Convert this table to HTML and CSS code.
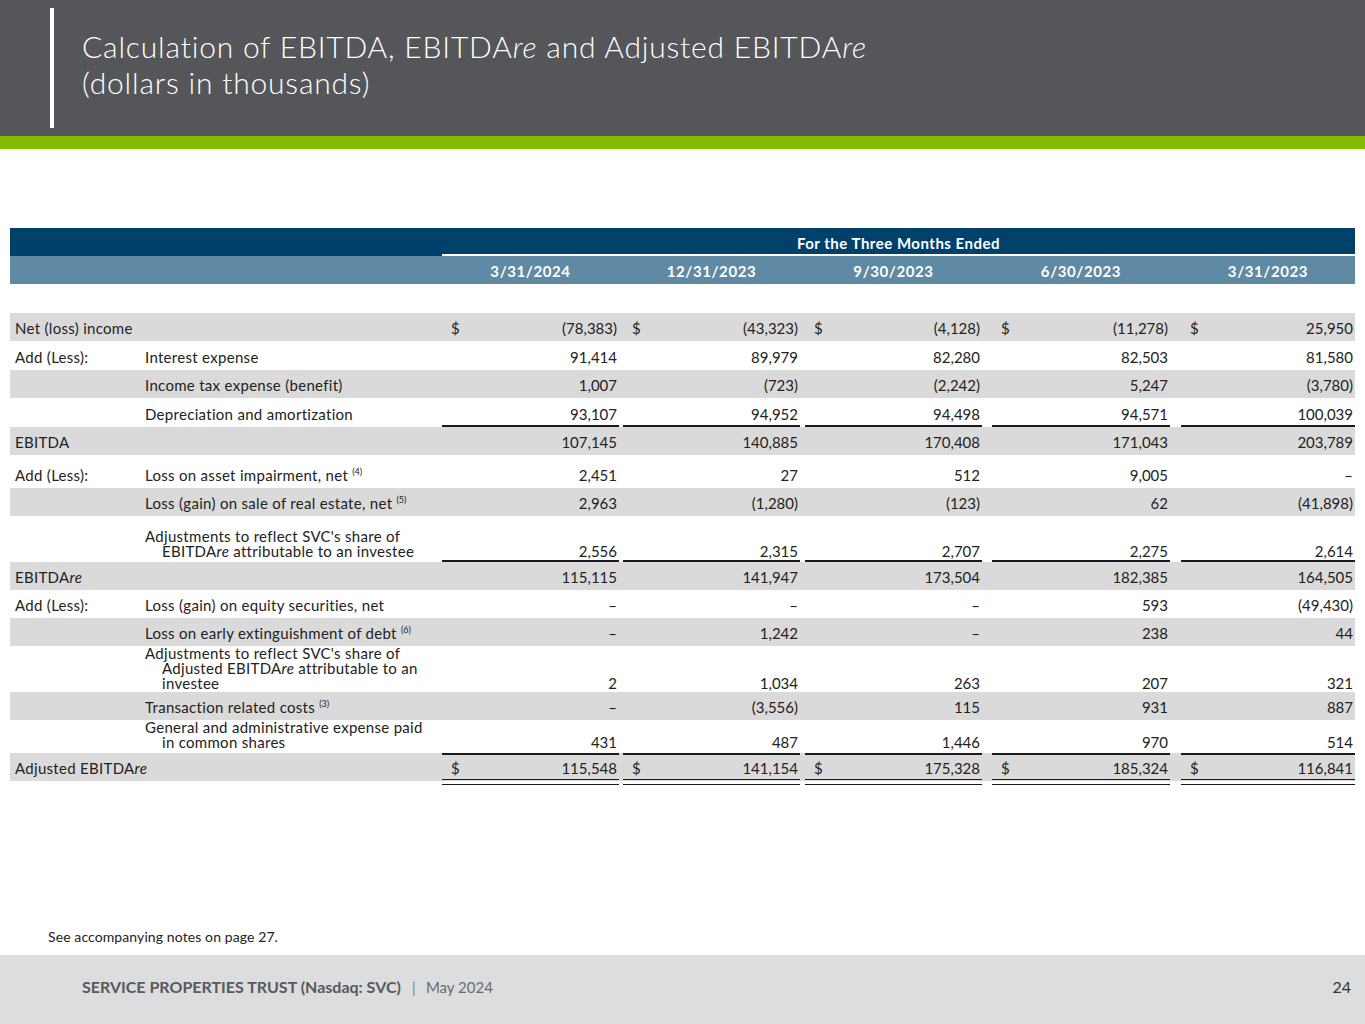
FILE: index.html
```html
<!DOCTYPE html>
<html lang="en">
<head>
<meta charset="utf-8">
<title>Calculation of EBITDA</title>
<link rel="stylesheet" href="styles.css">
</head>
<body>
<header class="top">
  <div class="vbar"></div>
  <h1 class="title">Calculation of EBITDA, EBITDA<i>re</i> and Adjusted EBITDA<i>re</i><br>(dollars in thousands)</h1>
</header>
<div class="green"></div>
<main class="content">
  <section class="fin">
    <div class="hrow1"><div class="hspan">For the Three Months Ended</div></div>
    <div class="row hrow2">
      <div class="c c1">3/31/2024</div>
      <div class="c c2">12/31/2023</div>
      <div class="c c3">9/30/2023</div>
      <div class="c c4">6/30/2023</div>
      <div class="c c5">3/31/2023</div>
    </div>
    <div class="gap"></div>

    <div class="row gray h28">
      <div class="lab full">Net (loss) income</div>
      <div class="c c1"><span>$</span><span>(78,383)</span></div>
      <div class="c c2"><span>$</span><span>(43,323)</span></div>
      <div class="c c3"><span>$</span><span>(4,128)</span></div>
      <div class="c c4"><span>$</span><span>(11,278)</span></div>
      <div class="c c5"><span>$</span><span>25,950</span></div>
    </div>
    <div class="row h29">
      <div class="lab">Add (Less):</div>
      <div class="lab2">Interest expense</div>
      <div class="c c1"><span></span><span>91,414</span></div>
      <div class="c c2"><span></span><span>89,979</span></div>
      <div class="c c3"><span></span><span>82,280</span></div>
      <div class="c c4"><span></span><span>82,503</span></div>
      <div class="c c5"><span></span><span>81,580</span></div>
    </div>
    <div class="row gray h28">
      <div class="lab2">Income tax expense (benefit)</div>
      <div class="c c1"><span></span><span>1,007</span></div>
      <div class="c c2"><span></span><span>(723)</span></div>
      <div class="c c3"><span></span><span>(2,242)</span></div>
      <div class="c c4"><span></span><span>5,247</span></div>
      <div class="c c5"><span></span><span>(3,780)</span></div>
    </div>
    <div class="row h29 ul">
      <div class="lab2">Depreciation and amortization</div>
      <div class="c c1"><span></span><span>93,107</span></div>
      <div class="c c2"><span></span><span>94,952</span></div>
      <div class="c c3"><span></span><span>94,498</span></div>
      <div class="c c4"><span></span><span>94,571</span></div>
      <div class="c c5"><span></span><span>100,039</span></div>
    </div>
    <div class="row gray h28">
      <div class="lab full">EBITDA</div>
      <div class="c c1"><span></span><span>107,145</span></div>
      <div class="c c2"><span></span><span>140,885</span></div>
      <div class="c c3"><span></span><span>170,408</span></div>
      <div class="c c4"><span></span><span>171,043</span></div>
      <div class="c c5"><span></span><span>203,789</span></div>
    </div>
    <div class="row h33">
      <div class="lab">Add (Less):</div>
      <div class="lab2">Loss on asset impairment, net <sup class="fn">(4)</sup></div>
      <div class="c c1"><span></span><span>2,451</span></div>
      <div class="c c2"><span></span><span>27</span></div>
      <div class="c c3"><span></span><span>512</span></div>
      <div class="c c4"><span></span><span>9,005</span></div>
      <div class="c c5"><span></span><span>–</span></div>
    </div>
    <div class="row gray h28">
      <div class="lab2">Loss (gain) on sale of real estate, net <sup class="fn">(5)</sup></div>
      <div class="c c1"><span></span><span>2,963</span></div>
      <div class="c c2"><span></span><span>(1,280)</span></div>
      <div class="c c3"><span></span><span>(123)</span></div>
      <div class="c c4"><span></span><span>62</span></div>
      <div class="c c5"><span></span><span>(41,898)</span></div>
    </div>
    <div class="row h46 ul tight">
      <div class="lab2">Adjustments to reflect SVC's share of<br>EBITDA<i>re</i> attributable to an investee</div>
      <div class="c c1"><span></span><span>2,556</span></div>
      <div class="c c2"><span></span><span>2,315</span></div>
      <div class="c c3"><span></span><span>2,707</span></div>
      <div class="c c4"><span></span><span>2,275</span></div>
      <div class="c c5"><span></span><span>2,614</span></div>
    </div>
    <div class="row gray h28">
      <div class="lab full">EBITDA<i>re</i></div>
      <div class="c c1"><span></span><span>115,115</span></div>
      <div class="c c2"><span></span><span>141,947</span></div>
      <div class="c c3"><span></span><span>173,504</span></div>
      <div class="c c4"><span></span><span>182,385</span></div>
      <div class="c c5"><span></span><span>164,505</span></div>
    </div>
    <div class="row h28">
      <div class="lab">Add (Less):</div>
      <div class="lab2">Loss (gain) on equity securities, net</div>
      <div class="c c1"><span></span><span>–</span></div>
      <div class="c c2"><span></span><span>–</span></div>
      <div class="c c3"><span></span><span>–</span></div>
      <div class="c c4"><span></span><span>593</span></div>
      <div class="c c5"><span></span><span>(49,430)</span></div>
    </div>
    <div class="row gray h28">
      <div class="lab2">Loss on early extinguishment of debt <sup class="fn">(6)</sup></div>
      <div class="c c1"><span></span><span>–</span></div>
      <div class="c c2"><span></span><span>1,242</span></div>
      <div class="c c3"><span></span><span>–</span></div>
      <div class="c c4"><span></span><span>238</span></div>
      <div class="c c5"><span></span><span>44</span></div>
    </div>
    <div class="row h46 tight">
      <div class="lab2">Adjustments to reflect SVC's share of<br>Adjusted EBITDA<i>re</i> attributable to an<br>investee</div>
      <div class="c c1"><span></span><span>2</span></div>
      <div class="c c2"><span></span><span>1,034</span></div>
      <div class="c c3"><span></span><span>263</span></div>
      <div class="c c4"><span></span><span>207</span></div>
      <div class="c c5"><span></span><span>321</span></div>
    </div>
    <div class="row gray h28">
      <div class="lab2">Transaction related costs <sup class="fn">(3)</sup></div>
      <div class="c c1"><span></span><span>–</span></div>
      <div class="c c2"><span></span><span>(3,556)</span></div>
      <div class="c c3"><span></span><span>115</span></div>
      <div class="c c4"><span></span><span>931</span></div>
      <div class="c c5"><span></span><span>887</span></div>
    </div>
    <div class="row h33 ul">
      <div class="lab2">General and administrative expense paid<br>in common shares</div>
      <div class="c c1"><span></span><span>431</span></div>
      <div class="c c2"><span></span><span>487</span></div>
      <div class="c c3"><span></span><span>1,446</span></div>
      <div class="c c4"><span></span><span>970</span></div>
      <div class="c c5"><span></span><span>514</span></div>
    </div>
    <div class="row gray h28 dul">
      <div class="lab full">Adjusted EBITDA<i>re</i></div>
      <div class="c c1"><span>$</span><span>115,548</span></div>
      <div class="c c2"><span>$</span><span>141,154</span></div>
      <div class="c c3"><span>$</span><span>175,328</span></div>
      <div class="c c4"><span>$</span><span>185,324</span></div>
      <div class="c c5"><span>$</span><span>116,841</span></div>
    </div>
  </section>
  <p class="note">See accompanying notes on page 27.</p>
</main>
<footer class="foot">
  <div class="brand"><b>SERVICE PROPERTIES TRUST (Nasdaq: SVC)</b><span class="sep">|</span><span class="date">May 2024</span></div>
  <div class="page">24</div>
</footer>
</body>
</html>
```

FILE: styles.css
```css
* { box-sizing: border-box; }
html, body { margin: 0; padding: 0; }
body {
  width: 1365px;
  height: 1024px;
  display: flex;
  flex-direction: column;
  font-family: "Lato", "Liberation Sans", sans-serif;
  color: #222;
  background: #fff;
  overflow: hidden;
}

.top {
  height: 136px;
  background: #55565a;
  display: flex;
  align-items: flex-start;
  padding: 8px 0 0 50px;
  flex-shrink: 0;
}
.vbar {
  width: 4px;
  height: 120px;
  background: #fff;
  flex-shrink: 0;
}
.title {
  margin: 20px 0 0 28px;
  font-weight: 300;
  font-size: 30px;
  line-height: 36px;
  color: #fff;
  letter-spacing: 0.8px;
}
.green {
  height: 13px;
  background: #84bc00;
  flex-shrink: 0;
}

.content {
  flex: 1;
  display: flex;
  flex-direction: column;
  padding: 79px 10px 0 10px;
}

.fin { width: 1345px; font-size: 15px; line-height: 15px; }

.hrow1 {
  height: 28px;
  background: #00416b;
  padding-left: 432px;
  display: flex;
}
.hspan {
  flex: 1;
  border-bottom: 2px solid #fff;
  color: #fff;
  font-weight: 700;
  font-size: 15px;
  letter-spacing: 0.5px;
  text-align: center;
  line-height: 30px;
}

.row {
  display: grid;
  grid-template-columns: 135px 297px 177px 4px 177px 5px 177px 10px 178px 11px 174px;
  align-items: end;
}
.hrow2 {
  height: 28px;
  background: #6089a3;
  color: #fff;
  font-weight: 700;
  font-size: 15px;
  letter-spacing: 0.6px;
  align-items: center;
}
.hrow2 .c { justify-content: center; padding: 3px 0 0 0; }

.gap { height: 29px; }

.gray { background: #dadada; }
.h28 { height: 28px; }
.h29 { height: 29px; }
.h33 { height: 33px; }
.h46 { height: 46px; }

.lab { grid-column: 1; padding: 0 0 5px 5px; white-space: nowrap; letter-spacing: 0.3px; }
.lab.full { grid-column: 1 / 3; }
.lab2 {
  grid-column: 2;
  padding: 0 0 5px 17px;
  text-indent: -17px;
  white-space: nowrap;
  letter-spacing: 0.3px;
}
.c {
  display: flex;
  justify-content: space-between;
  padding: 0 2px 5px 9px;
  white-space: nowrap;
}
.c1 { grid-column: 3; }
.c2 { grid-column: 5; }
.c3 { grid-column: 7; }
.c4 { grid-column: 9; }
.c5 { grid-column: 11; }

.tight .lab2, .tight .c { padding-bottom: 3px; }
.ul .c { border-bottom: 2px solid #1a1a1a; padding-bottom: 3px; }
.tight.ul .c { padding-bottom: 1px; }

.dul .c { position: relative; }
.dul .c::after {
  content: "";
  position: absolute;
  left: 0;
  right: 0;
  bottom: -4px;
  height: 4px;
  border-top: 1px solid #1a1a1a;
  border-bottom: 1px solid #1a1a1a;
}

.fn { font-size: 9px; line-height: 0; vertical-align: 6px; letter-spacing: 0; }

.note {
  margin: auto 0 10px 38px;
  font-size: 14px;
  line-height: 16px;
  color: #222;
  letter-spacing: 0.1px;
}

.foot {
  height: 69px;
  background: #dcdddf;
  display: flex;
  align-items: center;
  justify-content: space-between;
  padding: 0 14px 6px 82px;
  flex-shrink: 0;
  font-size: 16px;
  color: #58595b;
}
.brand b { font-weight: 700; color: #58595b; }
.sep { margin: 0 10px 0 11px; color: #888; }
.date { color: #6a6b6e; font-size: 15px; }
.page { color: #333; font-size: 16px; }
```
